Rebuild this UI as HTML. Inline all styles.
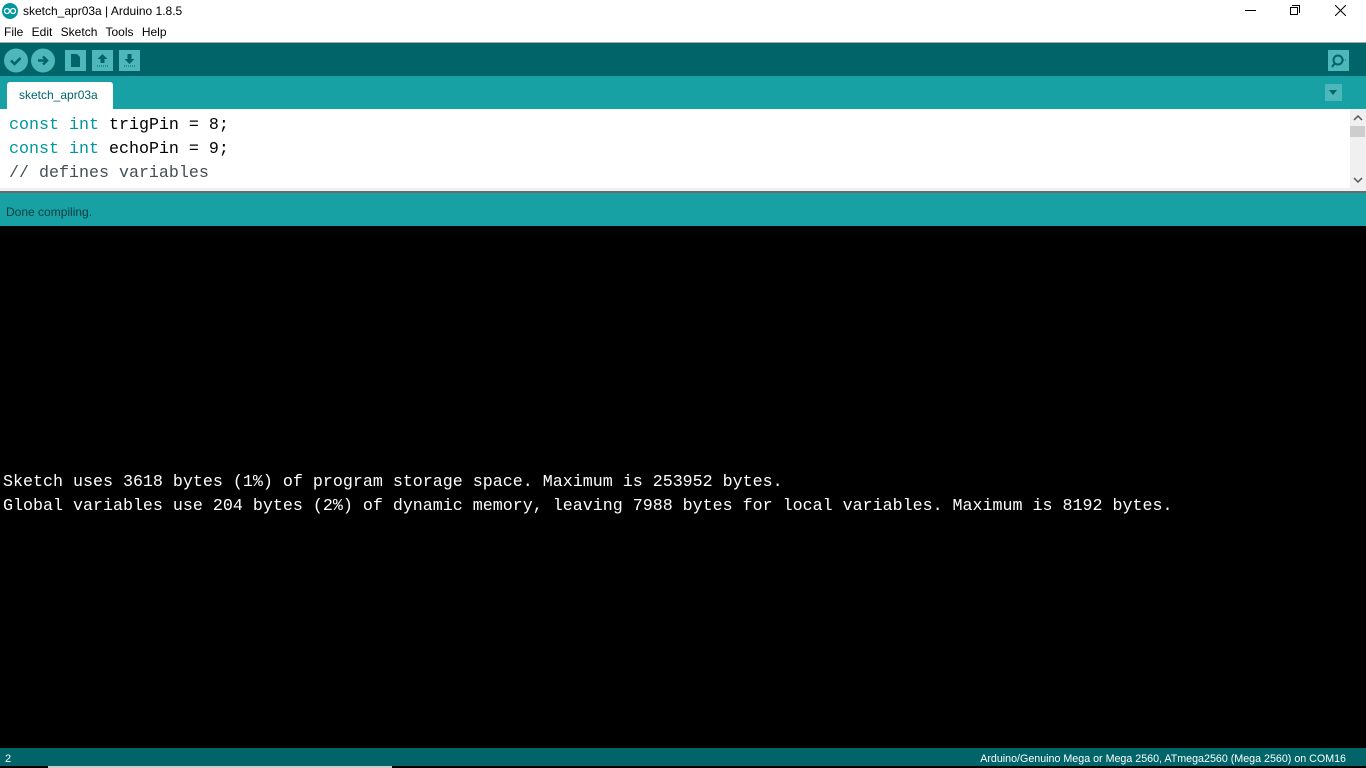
<!DOCTYPE html>
<html><head><meta charset="utf-8"><style>
*{margin:0;padding:0;box-sizing:border-box}
body{width:1366px;height:768px;overflow:hidden;background:#000;font-family:"Liberation Sans",sans-serif;position:relative}
.abs{position:absolute}
.mono{font-family:"Liberation Mono",monospace;font-size:16.67px;white-space:pre}
</style></head><body>
<div class="abs" style="left:0;top:0;width:1366px;height:42px;background:#fff"></div>
<svg class="abs" style="left:2px;top:3px" width="16" height="16"><circle cx="8" cy="8" r="8" fill="#00979c"/><circle cx="5" cy="8" r="2.5" fill="none" stroke="#fff" stroke-width="1.3"/><circle cx="11" cy="8" r="2.5" fill="none" stroke="#fff" stroke-width="1.3"/></svg>
<div class="abs" style="left:23px;top:4px;font-size:12px;color:#000">sketch_apr03a | Arduino 1.8.5</div>
<div class="abs" style="left:1245px;top:10px;width:11px;height:1px;background:#000"></div>
<div class="abs" style="left:1290px;top:7px;width:8px;height:8px;border:1px solid #000;background:#fff"></div>
<div class="abs" style="left:1292px;top:5px;width:8px;height:8px;border-top:1px solid #000;border-right:1px solid #000"></div>
<svg class="abs" style="left:1335px;top:5px" width="11" height="11"><path d="M0 0L11 11M11 0L0 11" stroke="#000" stroke-width="1"/></svg>
<div class="abs" style="left:4px;top:25px;font-size:12px;color:#000;word-spacing:5px">File Edit Sketch Tools Help</div>
<div class="abs" style="left:0;top:42px;width:1366px;height:1px;background:#aaa"></div>
<div class="abs" style="left:0;top:43px;width:1366px;height:33px;background:#006468"></div>
<svg class="abs" style="left:4px;top:48px" width="140" height="25">
<circle cx="12" cy="12.5" r="12" fill="#4db7bb"/><path d="M7 12.5l3.5 3.5 6-6" stroke="#006468" stroke-width="2.5" fill="none"/>
<circle cx="39" cy="12.5" r="12" fill="#4db7bb"/><path d="M34 12.5h8M39 8.5l4 4-4 4" stroke="#006468" stroke-width="2.5" fill="none"/>
<rect x="61" y="2" width="21" height="21" fill="#4db7bb"/><path d="M67 6h6l3 3v10h-9z" fill="#006468"/>
<rect x="88" y="2" width="21" height="21" fill="#4db7bb"/><path d="M98.5 6l-5 5h3v4h4v-4h3z" fill="#006468"/><path d="M93 18h11" stroke="#006468" stroke-dasharray="1 1"/>
<rect x="115" y="2" width="21" height="21" fill="#4db7bb"/><path d="M125.5 16l-5-5h3V6h4v5h3z" fill="#006468"/><path d="M120 18h11" stroke="#006468" stroke-dasharray="1 1"/>
</svg>
<svg class="abs" style="left:1328px;top:50px" width="21" height="21"><rect width="21" height="21" fill="#4db7bb"/><circle cx="10" cy="10" r="4.5" fill="none" stroke="#006468" stroke-width="2"/><path d="M7 13l-3 4" stroke="#006468" stroke-width="2"/><path d="M15 10h4" stroke="#006468" stroke-dasharray="1 1"/></svg>
<div class="abs" style="left:0;top:76px;width:1366px;height:33px;background:#17a1a5"></div>
<div class="abs" style="left:7px;top:82px;width:106px;height:27px;background:#fff;border-radius:3px 3px 0 0"></div>
<div class="abs" style="left:19px;top:88px;font-size:12px;color:#006468">sketch_apr03a</div>
<div class="abs" style="left:1325px;top:84px;width:17px;height:17px;background:#4db7bb"></div>
<div class="abs" style="left:1329px;top:90px;width:0;height:0;border-left:4.5px solid transparent;border-right:4.5px solid transparent;border-top:5px solid #006468"></div>
<div class="abs" style="left:0;top:109px;width:1366px;height:80px;background:#fff"></div>
<div class="abs mono" style="left:9px;top:114px;line-height:24px;color:#000"><span style="color:#00979c">const int</span> trigPin = 8;
<span style="color:#00979c">const int</span> echoPin = 9;
<span style="color:#434f54">// defines variables</span></div>
<div class="abs" style="left:1350px;top:109px;width:16px;height:79px;background:#f0f0f0"></div>
<div class="abs" style="left:1350px;top:126px;width:15px;height:11px;background:#cdcdcd"></div>
<svg class="abs" style="left:1353px;top:114px" width="10" height="70"><path d="M1 6l4-4 4 4M1 64l4 4 4-4" stroke="#555" stroke-width="1.5" fill="none"/></svg>
<div class="abs" style="left:0;top:188px;width:1366px;height:3px;background:#f0f0f0"></div>
<div class="abs" style="left:0;top:191px;width:1366px;height:2px;background:#6a6a6a"></div>
<div class="abs" style="left:0;top:193px;width:1366px;height:33px;background:#17a1a5"></div>
<div class="abs" style="left:6px;top:205px;font-size:12px;color:#0d3d3f">Done compiling.</div>
<div class="abs mono" style="left:3px;top:471px;line-height:24px;color:#fff">Sketch uses 3618 bytes (1%) of program storage space. Maximum is 253952 bytes.
Global variables use 204 bytes (2%) of dynamic memory, leaving 7988 bytes for local variables. Maximum is 8192 bytes.</div>
<div class="abs" style="left:0;top:748px;width:1366px;height:18px;background:#006468"></div>
<div class="abs" style="left:5px;top:753px;font-size:11px;color:#fff">2</div>
<div class="abs" style="right:20px;top:753px;font-size:10.7px;color:#fff">Arduino/Genuino Mega or Mega 2560, ATmega2560 (Mega 2560) on COM16</div>
<div class="abs" style="left:48px;top:766px;width:344px;height:2px;background:#ccc"></div>
</body></html>
